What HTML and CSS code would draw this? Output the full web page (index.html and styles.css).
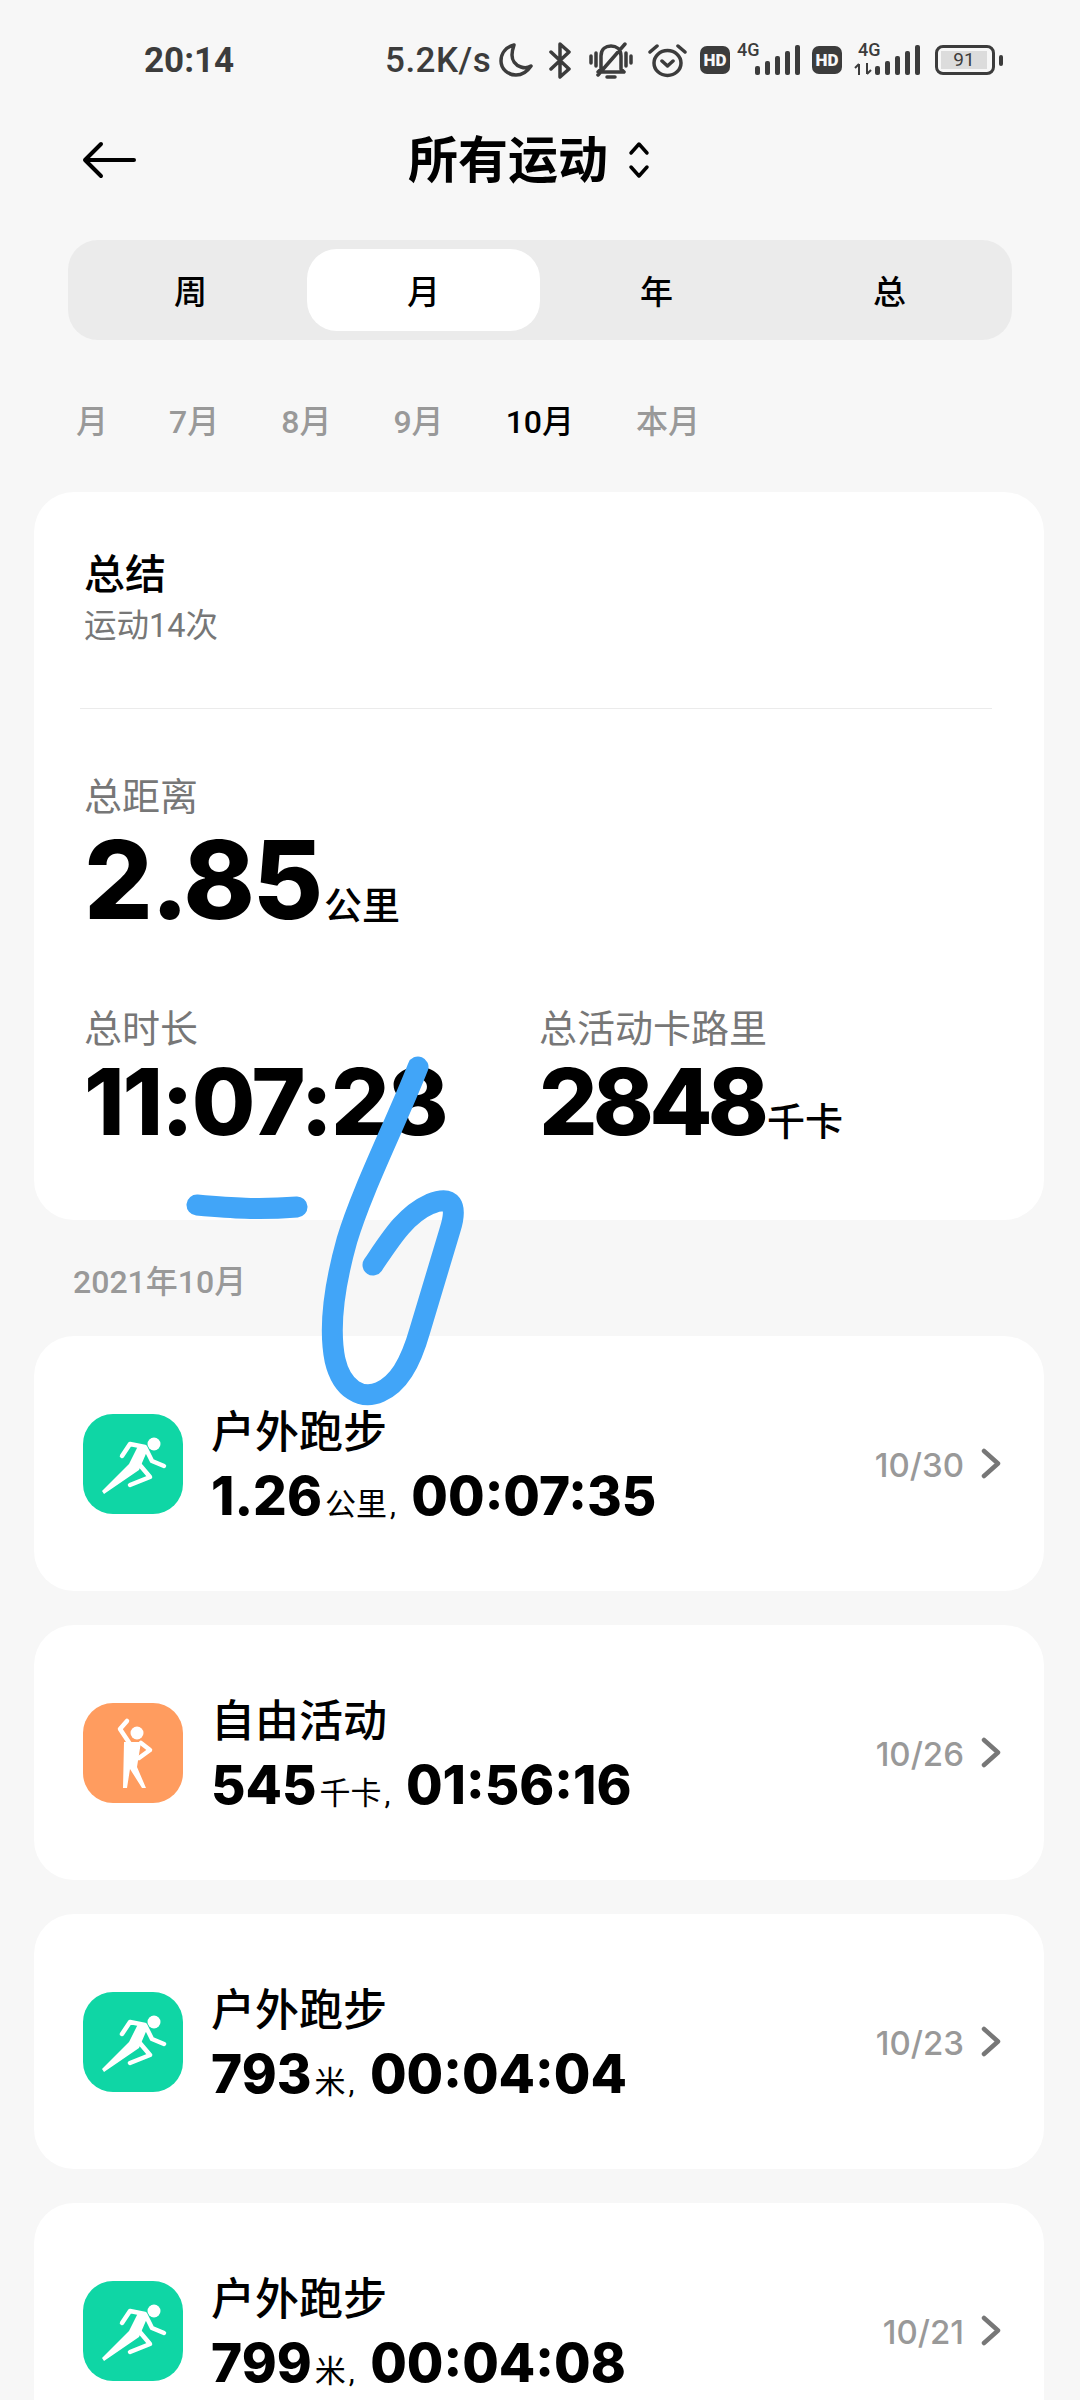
FILE: index.html
```html
<!doctype html>
<html lang="zh-CN">
  <head>
    <meta charset="UTF-8" />
    <meta name="viewport" content="width=device-width, initial-scale=1.0" />
    <title>所有运动</title>
    <link rel="stylesheet" href="styles.css">
  </head>
  <body>
    <div class="status-bar">
      <span class="clock">20:14</span>
      <div class="status-right">
        <span class="speed">5.2K/s</span>
        <svg class="si moon" viewBox="0 0 34 34"><path d="M15 2C7 4 2 10 2 18c0 8 7 14 15 14 6 0 11-3 15-9-3 2-7 2-10 1-6-2-9-7-9-12 0-4 1-7 2-10z" /></svg>
        <svg class="si blue" viewBox="0 0 23 37"><path d="M2 10l18 17-9 8V2l9 8L2 27" /></svg>
        <svg class="si bell" viewBox="0 0 44 37"><path d="M12 27V14C12 7 17 4 22 4s10 3 10 10v13l3 3H9zM18 35h8M2 14v7M7 11v13M37 11v13M42 14v7M9 33L36 2" /></svg>
        <svg class="si alarm" viewBox="0 0 39 35"><ellipse cx="19.5" cy="20" rx="13.5" ry="12.5" /><path d="M14 18l5.5 5 5.500-5M2 9l7-6M37 9l-7-6" /></svg>
        <span class="hd">HD</span>
        <div class="signal">
          <span class="net">4G</span>
          <div class="bars"><i class="b1"></i><i class="b2"></i><i class="b3"></i><i class="b4"></i><i class="b5"></i></div>
        </div>
        <span class="hd second">HD</span>
        <div class="signal second">
          <span class="net">4G</span>
          <svg class="arrows" viewBox="0 0 18 12"><path d="M5 12V1M1 5l4-4M13 0v11M17 7l-4 4" /></svg>
          <div class="bars"><i class="b1"></i><i class="b2"></i><i class="b3"></i><i class="b4"></i><i class="b5"></i></div>
        </div>
        <div class="battery"><div class="battery-body"><span class="battery-fill">91</span></div><i class="battery-tip"></i></div>
      </div>
    </div>

    <header class="top-bar">
      <svg class="back" viewBox="0 0 54 38"><path d="M52 19H3M19 3L3 19l16 16" /></svg>
      <h1 class="title">所有运动</h1>
      <svg class="updown" viewBox="0 0 22 38"><path d="M3 12l8-9 8 9M3 26l8 9 8-9" /></svg>
    </header>

    <nav class="tabs">
      <span class="tab">周</span>
      <span class="tab active">月</span>
      <span class="tab">年</span>
      <span class="tab">总</span>
    </nav>

    <div class="months">
      <span class="month m0">月</span>
      <span class="month m1">7月</span>
      <span class="month m1">8月</span>
      <span class="month m1">9月</span>
      <span class="month m1 current">10月</span>
      <span class="month m2">本月</span>
    </div>

    <section class="card summary">
      <h2 class="summary-title">总结</h2>
      <p class="summary-sub">运动14次</p>
      <hr class="divider" />
      <p class="stat-label">总距离</p>
      <p class="stat-big"><span class="big-num">2.85</span><small>公里</small></p>
      <div class="stat-row">
        <div class="stat-cell">
          <p class="stat-label">总时长</p>
          <p class="stat-mid"><span class="big-num time">11:07:28</span></p>
        </div>
        <div class="stat-cell">
          <p class="stat-label">总活动卡路里</p>
          <p class="stat-mid"><span class="big-num">2848</span><small>千卡</small></p>
        </div>
      </div>
    </section>

    <p class="list-date">2021年10月</p>

    <div class="list">
      <article class="card item">
        <svg class="ico run" viewBox="0 0 100 100"><circle class="fill" cx="71" cy="30" r="6.500" /><path class="fill" d="M55 32l10 3-9 21-35 24-2-3 27-27z" /><path class="line" d="M39 42l8-12 15 3 7 14 12 5M56 50l11 13-20 8" /></svg>
        <div class="item-text">
          <h3 class="item-title">户外跑步</h3>
          <p class="item-value"><span class="num">1.26</span><small>公里</small><em>,</em> <span class="num">00:07:35</span></p>
        </div>
        <span class="item-date">10/30</span>
        <svg class="chev" viewBox="0 0 20 31"><path d="M3 3l14 12.500L3 28" /></svg>
      </article>

      <article class="card item">
        <svg class="ico free" viewBox="0 0 100 100"><circle class="fill" cx="54" cy="30" r="6.500" /><path class="line" d="M44 18l-7 8 10 15M58 40l9 7-11 8" /><path class="fill" d="M41 39h17l-4 25 9 21h-4L47 66l-3 19h-4z" /></svg>
        <div class="item-text">
          <h3 class="item-title">自由活动</h3>
          <p class="item-value"><span class="num">545</span><small>千卡</small><em>,</em> <span class="num">01:56:16</span></p>
        </div>
        <span class="item-date">10/26</span>
        <svg class="chev" viewBox="0 0 20 31"><path d="M3 3l14 12.500L3 28" /></svg>
      </article>

      <article class="card item">
        <svg class="ico run" viewBox="0 0 100 100"><circle class="fill" cx="71" cy="30" r="6.500" /><path class="fill" d="M55 32l10 3-9 21-35 24-2-3 27-27z" /><path class="line" d="M39 42l8-12 15 3 7 14 12 5M56 50l11 13-20 8" /></svg>
        <div class="item-text">
          <h3 class="item-title">户外跑步</h3>
          <p class="item-value"><span class="num">793</span><small>米</small><em>,</em> <span class="num">00:04:04</span></p>
        </div>
        <span class="item-date">10/23</span>
        <svg class="chev" viewBox="0 0 20 31"><path d="M3 3l14 12.500L3 28" /></svg>
      </article>

      <article class="card item">
        <svg class="ico run" viewBox="0 0 100 100"><circle class="fill" cx="71" cy="30" r="6.500" /><path class="fill" d="M55 32l10 3-9 21-35 24-2-3 27-27z" /><path class="line" d="M39 42l8-12 15 3 7 14 12 5M56 50l11 13-20 8" /></svg>
        <div class="item-text">
          <h3 class="item-title">户外跑步</h3>
          <p class="item-value"><span class="num">799</span><small>米</small><em>,</em> <span class="num">00:04:08</span></p>
        </div>
        <span class="item-date">10/21</span>
        <svg class="chev" viewBox="0 0 20 31"><path d="M3 3l14 12.500L3 28" /></svg>
      </article>
    </div>

    <!-- handwriting drawn over the screenshot -->
    <svg class="scribble" viewBox="0 0 1080 2400"><path d="M197 1205c35 3 60 5 100 2 M418 1067C395 1125 362 1190 347 1240 333 1290 329 1330 335 1360 342 1390 362 1400 380 1392 398 1384 410 1365 420 1330L450 1230C458 1205 452 1195 430 1204 405 1215 390 1240 373 1265" /></svg>
  </body>
</html>
```

FILE: styles.css
```css
* {
  box-sizing: border-box;
}
html,
body {
  margin: 0;
  height: 2400px;
  overflow: hidden;
}
body {
  position: relative;
  width: 1080px;
  background: #f7f7f7;
  color: #000;
  font-family: Roboto, "Noto Sans CJK SC", sans-serif;
}
h1,
h2,
h3,
p {
  margin: 0;
  font-weight: inherit;
}

/* status bar */
.status-bar {
  display: flex;
  align-items: center;
  height: 120px;
  padding-left: 144px;
  color: #3c3c3c;
}
.clock {
  flex: none;
  width: 241px;
  font-size: 35px;
  font-weight: 700;
}
.status-right {
  display: flex;
  align-items: center;
  height: 40px;
}
.speed {
  flex: none;
  width: 114px;
  font-size: 35px;
  font-weight: 500;
  letter-spacing: 0.5px;
}
.si {
  flex: none;
  fill: none;
  stroke: #3c3c3c;
  stroke-width: 3.5;
  stroke-linecap: round;
  stroke-linejoin: round;
}
.moon {
  width: 34px;
  height: 34px;
  margin-right: 16px;
}
.blue {
  width: 23px;
  height: 37px;
  margin-right: 17px;
}
.bell {
  width: 44px;
  height: 37px;
  margin-right: 15px;
}
.alarm {
  width: 39px;
  height: 35px;
  margin-right: 13px;
}
.hd {
  flex: none;
  width: 30px;
  height: 28px;
  border-radius: 7px;
  background: #3c3c3c;
  color: #f7f7f7;
  font-size: 17px;
  font-weight: 900;
  line-height: 28px;
  text-align: center;
}
.signal {
  position: relative;
  flex: none;
  width: 63px;
  height: 34px;
  margin: 0 12px 0 7px;
}
.signal.second {
  width: 66px;
  margin: 0 15px 0 12px;
}
.net {
  position: absolute;
  left: 0;
  top: 0;
  font-size: 18px;
  font-weight: 500;
  line-height: 14px;
}
.second .net {
  left: 4px;
}
.bars {
  position: absolute;
  right: 0;
  bottom: 2px;
  display: flex;
  align-items: flex-end;
  gap: 5px;
}
.bars i {
  display: block;
  width: 5px;
  border-radius: 2px;
  background: #3c3c3c;
}
.b1 { height: 9px; }
.b2 { height: 14px; }
.b3 { height: 19px; }
.b4 { height: 24px; }
.b5 { height: 30px; }
.arrows {
  position: absolute;
  left: 0;
  bottom: 2px;
  width: 18px;
  height: 12px;
  fill: none;
  stroke: #3c3c3c;
  stroke-width: 2;
}
.battery {
  display: flex;
  align-items: center;
  gap: 4px;
}
.battery-body {
  width: 60px;
  height: 30px;
  padding: 3px;
  border: 3px solid #3c3c3c;
  border-radius: 8px;
}
.battery-fill {
  display: block;
  width: 46px;
  height: 18px;
  background: #dcdcdc;
  font-size: 19px;
  line-height: 18px;
  text-align: center;
}
.battery-tip {
  display: block;
  width: 4px;
  height: 11px;
  border-radius: 2px;
  background: #3c3c3c;
}

/* header */
.top-bar {
  display: flex;
  align-items: center;
  height: 80px;
  padding-left: 82px;
}
.back {
  width: 54px;
  height: 38px;
  margin-right: 272px;
  fill: none;
  stroke: #000;
  stroke-width: 4;
  stroke-linecap: round;
  stroke-linejoin: round;
}
.title {
  padding-top: 2px;
  font-size: 50px;
  font-weight: 700;
  line-height: 80px;
}
.updown {
  width: 22px;
  height: 38px;
  margin-left: 20px;
  fill: none;
  stroke: #000;
  stroke-width: 3.5;
  stroke-linecap: round;
  stroke-linejoin: round;
}

/* period tabs */
.tabs {
  display: flex;
  width: 944px;
  height: 100px;
  margin: 40px 0 0 68px;
  padding: 9px 6px;
  border-radius: 30px;
  background: #ebebeb;
}
.tab {
  flex: 1;
  display: flex;
  align-items: center;
  justify-content: center;
  border-radius: 30px;
  font-size: 33px;
  font-weight: 500;
}
.tab.active {
  background: #fff;
}

/* month strip */
.months {
  display: flex;
  align-items: center;
  height: 44px;
  margin-top: 57px;
  padding-left: 76px;
  color: #999;
  font-size: 32px;
  font-weight: 500;
}
.m0 { margin-right: 61px; }
.m1 { margin-right: 62px; }
.month.current {
  color: #000;
}

/* cards */
.card {
  border-radius: 40px;
  background: #fff;
}
.summary {
  width: 1010px;
  height: 728px;
  margin: 51px 0 0 34px;
  padding: 58px 50px 0;
}
.summary-title {
  font-size: 41px;
  font-weight: 500;
  line-height: 50px;
}
.summary-sub {
  margin-top: 5px;
  color: #777;
  font-size: 32.5px;
  line-height: 42px;
}
.divider {
  height: 1px;
  margin: 61px 2px 0 -4px;
  border: 0;
  background: #ebebeb;
}
.stat-label {
  color: #777;
  font-size: 38px;
  line-height: 50px;
}
.divider + .stat-label {
  margin-top: 63px;
}
.stat-big {
  height: 120px;
  line-height: 116px;
}
.stat-mid {
  height: 96px;
  line-height: 96px;
}
.big-num {
  font-family: Inter, Roboto, sans-serif;
  font-weight: 800;
}
.stat-big .big-num {
  font-size: 108px;
  letter-spacing: -2.2px;
}
.stat-mid .big-num {
  font-size: 92px;
  letter-spacing: -4.8px;
}
.stat-mid .big-num.time {
  letter-spacing: -2px;
}
.stat-big small,
.stat-mid small {
  margin-left: 3px;
  font-size: 38px;
  font-weight: 500;
}
.stat-row {
  display: flex;
  margin-top: 62px;
}
.stat-cell {
  width: 456px;
}

.list-date {
  margin: 40px 0 0 73px;
  color: #999;
  font-size: 32px;
  font-weight: 500;
  line-height: 44px;
}

/* activity list */
.list {
  display: flex;
  flex-direction: column;
  gap: 34px;
  margin: 32px 0 0 34px;
  width: 1010px;
}
.item {
  flex: none;
  display: flex;
  align-items: center;
  height: 255px;
  padding: 0 43px 0 49px;
}
.ico {
  flex: none;
  width: 100px;
  height: 100px;
  border-radius: 30px;
}
.run {
  background: #0fd6a5;
}
.free {
  background: #ff9c5f;
}
.ico .fill {
  fill: #fff;
}
.ico .line {
  fill: none;
  stroke: #fff;
  stroke-width: 4.5;
  stroke-linecap: round;
  stroke-linejoin: round;
}
.item-text {
  flex: 1;
  margin-left: 28px;
  padding-top: 15px;
}
.item-title {
  font-size: 44px;
  font-weight: 500;
  line-height: 58px;
}
.item-value {
  font-size: 30px;
  line-height: 68px;
}
.num {
  font-family: Inter, Roboto, sans-serif;
  font-size: 53px;
  font-weight: 800;
}
.item-value small {
  margin-left: 3px;
  font-size: 31px;
  font-weight: 400;
}
.item-value em {
  margin-left: 3px;
  margin-right: 8px;
  font-style: normal;
  font-weight: 400;
}
.item-date {
  padding-top: 2px;
  color: #999;
  font-family: Inter, Roboto, sans-serif;
  font-size: 33px;
  font-weight: 500;
}
.chev {
  width: 20px;
  height: 31px;
  margin-left: 17px;
  fill: none;
  stroke: #777;
  stroke-width: 4.5;
  stroke-linecap: round;
  stroke-linejoin: round;
}

.scribble {
  position: absolute;
  left: 0;
  top: 0;
  width: 1080px;
  height: 2400px;
  fill: none;
  stroke: #41a5f8;
  stroke-width: 21;
  stroke-linecap: round;
  stroke-linejoin: round;
  pointer-events: none;
}
```
